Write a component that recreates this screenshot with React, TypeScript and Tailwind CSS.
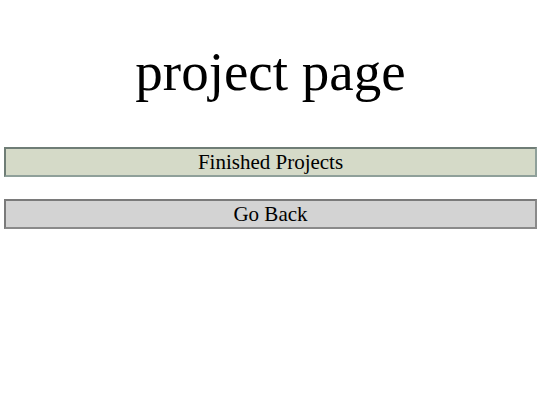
export default function App() {
  return (
    <div className="flex flex-col bg-white pl-[4px] pr-[3px] pt-[36px] font-['Liberation_Serif',serif] text-black">
      <h1 className="text-center text-[55px] leading-[72px]">project page</h1>
      <div className="mt-[39px] flex flex-col gap-[22px]">
        <button className="h-[30px] w-full border-2 border-t-[#6f7d76] border-l-[#6f7d76] border-b-[#8fa09a] border-r-[#8fa09a] bg-[#d5dac8] font-['Liberation_Serif',serif] text-[21px] leading-none">
          Finished Projects
        </button>
        <button className="h-[30px] w-full border-2 border-t-[#7a7a7a] border-l-[#7a7a7a] border-b-[#8a8a8a] border-r-[#8a8a8a] bg-[#d3d3d3] font-['Liberation_Serif',serif] text-[21px] leading-none">
          Go Back
        </button>
      </div>
    </div>
  );
}
